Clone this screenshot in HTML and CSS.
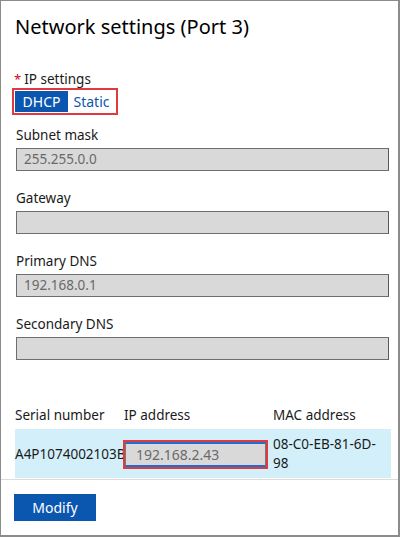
FILE: index.html
```html
<!DOCTYPE html>
<html>
<head>
<meta charset="utf-8">
<link rel="stylesheet" href="styles.css">
</head>
<body>
<div class="frame">
  <div class="content">
    <h1 class="title">Network settings (Port 3)</h1>
    <div class="ip-settings">
      <div class="req-label"><span class="star">*</span>IP settings</div>
      <div class="toggle">
        <span class="seg seg-on">DHCP</span><span class="seg seg-off">Static</span>
      </div>
    </div>
    <div class="field">
      <div class="label">Subnet mask</div>
      <div class="input">255.255.0.0</div>
    </div>
    <div class="field">
      <div class="label">Gateway</div>
      <div class="input"></div>
    </div>
    <div class="field">
      <div class="label">Primary DNS</div>
      <div class="input">192.168.0.1</div>
    </div>
    <div class="field">
      <div class="label">Secondary DNS</div>
      <div class="input"></div>
    </div>
    <div class="table">
      <div class="thead">
        <div class="c1">Serial number</div>
        <div class="c2">IP address</div>
        <div class="c3">MAC address</div>
      </div>
      <div class="trow">
        <div class="c1">A4P1074002103B</div>
        <div class="c2"><div class="ip-wrap"><div class="ip-input">192.168.2.43</div></div></div>
        <div class="c3">08-C0-EB-81-6D-98</div>
      </div>
    </div>
  </div>
  <div class="footer">
    <button class="btn">Modify</button>
  </div>
</div>
</body>
</html>
```
FILE: styles.css
```css
* { box-sizing: border-box; }
html, body { margin: 0; padding: 0; background: #fff; }
body {
  font-family: "Segoe UI", "Noto Sans", "Open Sans", sans-serif;
  color: #1a1a1a;
  font-size: 13.5px;
}
.frame {
  width: 400px;
  height: 537px;
  border: 1px solid #8c8c8c;
  border-right-width: 2px;
  border-bottom-width: 2px;
  display: flex;
  flex-direction: column;
}
.content {
  padding: 0 9px 0 13px;
}
.title {
  margin: 0;
  padding-top: 12px;
  font-size: 20px;
  font-weight: 400;
  line-height: 28px;
  color: #000;
  padding-left: 1px;
}
.ip-settings { margin-top: 29px; }
.req-label { line-height: 18px; }
.star { color: #d0021b; margin-right: 3px; font-size: 13px; }
.toggle {
  display: inline-flex;
  margin-top: 0;
  margin-left: -2px;
  border: 2px solid #e0393e;
  padding: 1px;
  background: #fff;
}
.seg {
  height: 21px;
  line-height: 21px;
  font-size: 14px;
  text-align: center;
}
.seg-on { width: 53px; background: #0b57b0; color: #fff; }
.seg-off { width: 47px; background: #fff; color: #0b57b0; }
.field { margin-top: 10px; padding-left: 2px; }
.field + .field { margin-top: 17px; }
.label { line-height: 20px; }
.input {
  margin-top: 3px;
  height: 23px;
  border: 1px solid #6e6e6e;
  border-right-color: #5a5a5a;
  background: #d9d9d9;
  color: #6a6a6a;
  padding-left: 7px;
  line-height: 21px;
}
.table { margin-top: 41px; padding-left: 1px; }
.thead, .trow { display: flex; align-items: center; }
.thead { height: 28px; }
.trow {
  height: 49px;
  background: #d3f0fa;
  margin-right: -2px;
}
.c1 { width: 109px; white-space: nowrap; }
.c2 { width: 149px; }
.c3 { flex: 1; line-height: 19px; padding-right: 8px; }
.trow .c3 { padding-top: 1px; }
.ip-wrap {
  width: 145px;
  height: 29px;
  border: 2px solid #e0393e;
  margin-left: -1px;
  margin-top: 1px;
}
.ip-input {
  height: 25px;
  border-top: 2px solid #1e6fd0;
  border-bottom: 2px solid #1e6fd0;
  border-left: 1px solid #777;
  border-right: 1px solid #777;
  background: #d9d9d9;
  color: #6a6a6a;
  padding-left: 10px;
  line-height: 21px;
  font-size: 14px;
}
.footer {
  margin-top: 1px;
  border-top: 1px solid #dcdcdc;
  padding: 14px 13px;
}
.btn {
  font-family: inherit;
  font-size: 14px;
  width: 82px;
  height: 27px;
  border: 0;
  background: #0b57b0;
  color: #fff;
  padding: 0;
  border-radius: 0;
}
```
